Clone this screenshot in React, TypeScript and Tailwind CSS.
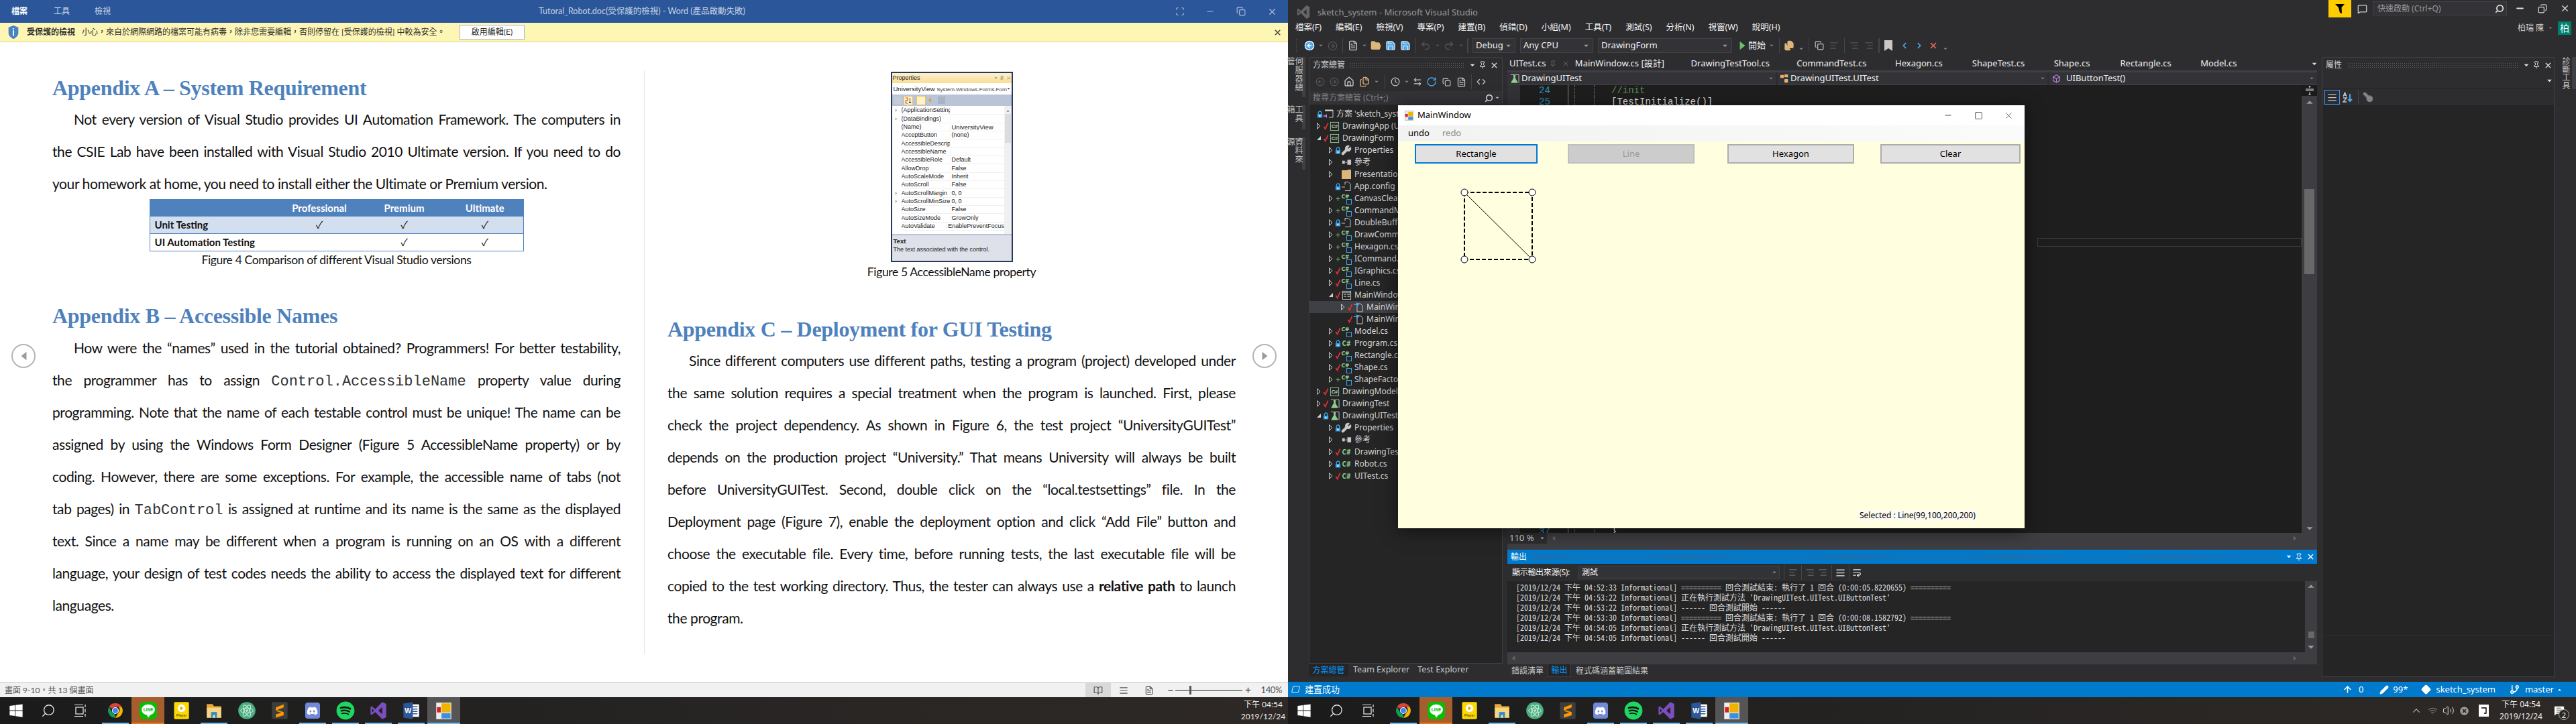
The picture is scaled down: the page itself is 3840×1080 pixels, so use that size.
import type { ReactNode } from "react";
import {
  AlignJustify, AlignLeft, AlignRight, ArrowLeftRight, ArrowUp, BookOpen, ChevronLeft, ChevronRight, ChevronUp, CircleArrowLeft, CircleArrowRight, CircleX, Clock, Code,
  Copy, Diamond, FileText, Files, FolderOpen, GitBranch, House, KeyRound, MessageSquare, MessageSquareText, Minus, Pencil, Pin, Plus, RotateCw, Save,
  Scan, Search, Square, Undo2, Redo2, Volume2, Wifi, Wrench, WrapText, X,
} from "lucide-react";
import { FaDiscord, FaWindows } from "react-icons/fa";

const grip = "bg-[radial-gradient(circle,#5c5c60_0.7px,transparent_0.8px)] bg-[length:3px_3px]";

// ---------- shared small drawings ----------

function VsLogo({ className }: { className: string }) {
  return (
    <svg viewBox="0 0 24 24" className={className} fill="currentColor">
      <path fillRule="evenodd" d="M17 1 L22 3.5 V20.5 L17 23 L8 14 L3.5 17.5 L2 16.5 V7.5 L3.5 6.5 L8 10 Z M17 7.5 L12 12 L17 16.5 Z M4 9.5 V14.5 L6.4 12 Z" />
    </svg>
  );
}

function Tri({ dir = "down", className = "" }: { dir?: "down" | "up" | "left" | "right"; className?: string }) {
  const pts = { down: "0,1 8,1 4,5", up: "0,5 8,5 4,1", left: "6,0 6,8 1,4", right: "1,0 1,8 6,4" }[dir];
  return (
    <svg viewBox={dir === "left" || dir === "right" ? "0 0 7 8" : "0 0 8 6"} className={className} fill="currentColor">
      <polygon points={pts} />
    </svg>
  );
}

function Taskbar({ tray }: { tray?: boolean }) {
  const icons: { icon: ReactNode; line?: string; bg?: string }[] = [
    {
      line: "bg-[#76b9ed] w-[40px]",
      icon: (
        <svg viewBox="0 0 24 24" className="h-[26px] w-[26px]">
          <path fill="#db4437" d="M3.3 7A10 10 0 0 1 20.7 7H12a5 5 0 0 0-4.3 2.5Z" />
          <path fill="#f4b400" d="M20.7 7A10 10 0 0 1 12 22l4.3-7.5a5 5 0 0 0 0-7.5Z" />
          <path fill="#0f9d58" d="M12 22A10 10 0 0 1 3.3 7l4.3 7.5a5 5 0 0 0 4.4 2.5Z" />
          <circle cx="12" cy="12" r="4.6" fill="#fff" />
          <circle cx="12" cy="12" r="3.6" fill="#4285f4" />
        </svg>
      ),
    },
    {
      line: "bg-[#f07a12] w-[49px]",
      bg: "bg-[#a65e2e]",
      icon: (
        <svg viewBox="0 0 24 24" className="h-[28px] w-[28px]">
          <rect x="1" y="1" width="22" height="22" rx="5" fill="#00c300" />
          <ellipse cx="12" cy="11" rx="8.5" ry="7" fill="#fff" />
          <path d="M10 17 L12 21 L15 17 Z" fill="#fff" />
          <text x="12" y="13" textAnchor="middle" fontSize="5.5" fontWeight="700" fill="#00c300" fontFamily="Liberation Sans, sans-serif">LINE</text>
        </svg>
      ),
    },
    {
      icon: (
        <svg viewBox="0 0 24 24" className="h-[28px] w-[28px]">
          <rect x="3" y="1" width="19" height="22" rx="1.5" fill="#ffd800" />
          <circle cx="12.5" cy="9" r="5" fill="#fff" />
          <polygon points="11,6.5 15,9 11,11.5" fill="#e0a000" />
          <text x="12.5" y="20" textAnchor="middle" fontSize="4.5" fontWeight="700" fill="#6b5a00" fontFamily="Liberation Sans, sans-serif">Player</text>
        </svg>
      ),
    },
    {
      line: "bg-[#76b9ed] w-[40px]",
      icon: (
        <svg viewBox="0 0 24 24" className="h-[26px] w-[26px]">
          <path fill="#e8a93a" d="M2 3h8l2 3h10v4H2Z" />
          <rect x="2" y="8" width="20" height="14" fill="#f6d680" />
          <rect x="8" y="14" width="8" height="8" fill="#2a8ad4" />
          <rect x="10.5" y="18" width="3" height="4" fill="#f6d680" />
        </svg>
      ),
    },
    {
      icon: (
        <svg viewBox="0 0 24 24" className="h-[28px] w-[28px]" fill="none">
          <circle cx="12" cy="12" r="11" fill="#4aae80" />
          <g stroke="#d9f2e5" strokeWidth="0.8">
            <ellipse cx="12" cy="12" rx="8" ry="3.2" />
            <ellipse cx="12" cy="12" rx="8" ry="3.2" transform="rotate(60 12 12)" />
            <ellipse cx="12" cy="12" rx="8" ry="3.2" transform="rotate(120 12 12)" />
          </g>
          <circle cx="12" cy="12" r="1.4" fill="#d9f2e5" />
        </svg>
      ),
    },
    {
      icon: (
        <svg viewBox="0 0 24 24" className="h-[28px] w-[28px]">
          <rect x="2" y="1" width="20" height="22" rx="1.5" fill="#3d3d3d" />
          <path fill="#ff9800" d="M17 4 L7 8 V12 L17 8 Z M7 11 L17 14 V18 L7 21 V17 L14 14.5 L7 12.5 Z" />
        </svg>
      ),
    },
    {
      line: "bg-[#76b9ed] w-[40px]",
      icon: (
        <span className="flex h-[24px] w-[22px] items-center justify-center rounded-[4px] bg-[#7289da] text-white">
          <FaDiscord className="h-[17px] w-[17px]" />
        </span>
      ),
    },
    {
      line: "bg-[#76b9ed] w-[40px]",
      icon: (
        <svg viewBox="0 0 24 24" className="h-[28px] w-[28px]" fill="none" stroke="#111" strokeLinecap="round">
          <circle cx="12" cy="12" r="11.5" fill="#1ed760" stroke="none" />
          <path strokeWidth="2.4" d="M6 8.6c4-1.2 8.5-.9 12 1" />
          <path strokeWidth="2" d="M6.8 12.3c3.5-1 7.2-.6 10.2 1.1" />
          <path strokeWidth="1.6" d="M7.5 15.7c2.8-.7 5.7-.4 8.2 1" />
        </svg>
      ),
    },
    { line: "bg-[#76b9ed] w-[40px]", icon: <VsLogo className="h-[30px] w-[28px] text-[#7b4fc0]" /> },
    {
      line: "bg-[#76b9ed] w-[40px]",
      icon: (
        <svg viewBox="0 0 24 24" className="h-[28px] w-[28px]">
          <rect x="9" y="4" width="13" height="16" fill="#fff" />
          <path d="M11 7h9M11 10h9M11 13h9M11 16h9" stroke="#2b579a" strokeWidth="1.3" />
          <path d="M2 3 L14 1 V23 L2 21 Z" fill="#2b579a" />
          <text x="8" y="15.5" textAnchor="middle" fontSize="9" fontWeight="700" fill="#fff" fontFamily="Liberation Sans, sans-serif">W</text>
        </svg>
      ),
    },
    {
      line: "bg-[#76b9ed] w-[49px]",
      bg: "bg-[#555555]",
      icon: (
        <svg viewBox="0 0 24 24" className="h-[27px] w-[27px]">
          <rect x="2" y="1" width="20" height="22" fill="#eee" />
          <rect x="3" y="7" width="5" height="7" fill="#d32020" />
          <rect x="9" y="2" width="12" height="12" fill="#f0b400" />
          <rect x="9" y="15" width="12" height="7" fill="#3f8fe0" />
        </svg>
      ),
    },
  ];
  return (
    <div className="flex h-[40px] shrink-0 items-stretch bg-linear-to-r from-[#1b1b1b] via-[#262423] to-[#2e2926] text-[#eeeeee]">
      <div className="flex w-[48px] items-center justify-center"><FaWindows className="h-[22px] w-[22px] text-white" /></div>
      <div className="flex w-[48px] items-center justify-center"><Search className="h-[22px] w-[22px] -scale-x-100" strokeWidth={1.4} /></div>
      <div className="mr-[3px] flex w-[48px] items-center justify-center">
        <svg viewBox="0 0 20 20" className="h-[20px] w-[20px]" fill="none" stroke="#eee" strokeWidth="1.2">
          <rect x="3" y="5" width="11" height="10" />
          <path d="M1 1.5h13M1 18.5h13M17 1v4M17 7.5v5M17 15v4" />
        </svg>
      </div>
      {icons.map((it, i) => (
        <div key={i} className={`relative flex w-[49px] items-center justify-center ${it.bg ?? ""}`}>
          {it.icon}
          {it.line && <span className={`absolute bottom-0 h-[2px] ${it.line}`} />}
        </div>
      ))}
      <div className="ml-auto flex items-center">
        {tray && (
          <div className="mr-[14px] flex items-center text-[#d8d8d8]">
            <ChevronUp className="mr-[8px] h-[18px] w-[18px]" strokeWidth={1.4} />
            <Wifi className="mr-[7px] h-[15px] w-[15px] text-[#999]" strokeWidth={1.4} />
            <Volume2 className="mr-[6px] h-[18px] w-[18px]" strokeWidth={1.3} />
            <CircleX className="mr-[13px] h-[17px] w-[17px] fill-[#999] text-[#222]" strokeWidth={2} />
            <svg viewBox="0 0 15 18" className="h-[18px] w-[15px]">
              <rect width="15" height="18" fill="#fff" />
              <path d="M4 5h7v8H8" fill="none" stroke="#000" strokeWidth="1.4" />
            </svg>
          </div>
        )}
        <div className={`flex flex-col items-center text-[12px] leading-[18px] ${tray ? "w-[68px]" : "mr-[3px] w-[68px]"}`}>
          <span>下午 04:54</span>
          <span>2019/12/24</span>
        </div>
        {tray && (
          <div className="relative ml-[14px] mr-[10px] w-[24px]">
            <MessageSquareText className="h-[18px] w-[18px] fill-white text-[#333]" strokeWidth={1.2} />
            <span className="absolute left-[8px] top-[7px] flex h-[16px] w-[16px] items-center justify-center rounded-full border border-[#aaa] bg-[#2a2725] text-[11px] leading-none">2</span>
          </div>
        )}
      </div>
    </div>
  );
}

// ---------- Word side ----------

function Line({ indent, last, children }: { indent?: boolean; last?: boolean; children: ReactNode }) {
  return (
    <div
      className={`h-[48px] whitespace-nowrap text-[21px] leading-[48px] tracking-[-0.42px] text-[#111] ${indent ? "pl-[32px]" : ""} ${last ? "" : "[text-align-last:justify]"}`}
    >
      {children}
    </div>
  );
}

function Mono({ children }: { children: ReactNode }) {
  return <span className="font-['Liberation_Mono',monospace] text-[22px] font-normal tracking-normal text-[#333]">{children}</span>;
}

function Heading({ children, className = "" }: { children: ReactNode; className?: string }) {
  return <h2 className={`h-[48px] whitespace-nowrap font-['Liberation_Serif',serif] text-[32px] font-bold leading-[48px] tracking-[-0.3px] text-[#4f81bd] ${className}`}>{children}</h2>;
}

function NavCircle({ side }: { side: "left" | "right" }) {
  return (
    <div className={`absolute top-[513px] flex h-[36px] w-[36px] items-center justify-center rounded-full border-2 border-[#b5b5b5] bg-white text-[#9a9a9a] ${side === "left" ? "left-[17px]" : "left-[1867px]"}`}>
      <Tri dir={side} className="h-[20px] w-[11px]" />
    </div>
  );
}

const gridRows: [string, string, boolean?][] = [
  ["(ApplicationSetting", "", true],
  ["(DataBindings)", "", true],
  ["(Name)", "UniversityView"],
  ["AcceptButton", "(none)"],
  ["AccessibleDescripti", ""],
  ["AccessibleName", ""],
  ["AccessibleRole", "Default"],
  ["AllowDrop", "False"],
  ["AutoScaleMode", "Inherit"],
  ["AutoScroll", "False"],
  ["AutoScrollMargin", "0, 0", true],
  ["AutoScrollMinSize", "0, 0", true],
  ["AutoSize", "False"],
  ["AutoSizeMode", "GrowOnly"],
  ["AutoValidate", "EnablePreventFocusC"],
];

function PropertyFigure() {
  return (
    <div className="mx-auto flex h-[284px] w-[182px] flex-col border-2 border-[#26395a] bg-[#ccd5e3] font-['Liberation_Sans',sans-serif] text-[9px] leading-none text-[#222]">
      <div className="flex h-[15px] shrink-0 items-center justify-between bg-linear-to-b from-[#fdf0cc] to-[#f8dd93] px-[1px]">
        <span>Properties</span>
        <span className="flex items-center gap-[3px] text-[#666]"><Tri className="h-[3px] w-[5px]" /><Pin className="h-[7px] w-[7px]" /><X className="h-[7px] w-[7px]" /></span>
      </div>
      <div className="flex h-[17px] shrink-0 items-center justify-between whitespace-nowrap bg-white px-[2px]">
        <span className="overflow-hidden"><span className="text-[9.5px]">UniversityView</span> <span className="text-[8px] text-[#444]">System.Windows.Forms.Forn</span></span>
        <Tri className="h-[3px] w-[5px] shrink-0" />
      </div>
      <div className="flex h-[17px] shrink-0 items-center gap-[3px] bg-[#b9c5d6] px-[3px] text-[#555]">
        <span className="h-[11px] w-[11px] bg-[#c4ccd8]" />
        <span className="flex h-[14px] w-[14px] items-center justify-center border border-[#e5c365] bg-[#fff2c8]">
          <svg viewBox="0 0 10 10" className="h-[10px] w-[10px]" fill="none"><path d="M1 1h3v4H1v4h3" stroke="#c33" /><path d="M7.5 1v8M6 7l1.5 2L9 7" stroke="#333" /></svg>
        </span>
        <span className="ml-[2px] h-[14px] w-[14px] border border-[#e5c365] bg-[#fff2c8]" />
        <svg viewBox="0 0 8 12" className="h-[11px] w-[7px]"><path d="M5 0 L1 7h3L3 12l4-7H4Z" fill="#e09a20" /></svg>
        <span className="ml-[5px] h-[11px] w-[11px] bg-[#a8b4c6]" />
      </div>
      <div className="relative flex-1 overflow-hidden bg-white">
        <div className="flex flex-col pl-[14px] pr-[11px] pt-[1px]">
          {gridRows.map(([n, v, exp]) => (
            <div key={n} className="relative flex h-[12.35px] shrink-0 items-center whitespace-nowrap border-b border-[#f0f0f0]">
              {exp && <Tri dir="right" className="absolute left-[-10px] h-[5px] w-[4px] text-[#aaa]" />}
              <span className="w-[73px] overflow-hidden border-r border-[#f0f0f0]">{n}</span>
              <span className={`overflow-hidden pl-[2px] ${n === "(Name)" ? "text-[9.5px] font-medium" : ""}`}>{v}</span>
            </div>
          ))}
        </div>
        <div className="absolute right-0 top-0 flex h-full w-[11px] flex-col items-center bg-[#f0f0f0]">
          <Tri dir="up" className="mt-[6px] h-[3px] w-[5px] text-[#555]" />
          <span className="mt-[3px] h-[43px] w-[9px] bg-[#dcdcdc]" />
        </div>
      </div>
      <div className="h-[40px] shrink-0 border-t-2 border-[#b9c5d6] bg-[#dee1e9] px-[2px] pt-[4px]">
        <div className="text-[9.5px] font-semibold">Text</div>
        <div className="mt-[3px] whitespace-nowrap">The text associated with the control.</div>
      </div>
    </div>
  );
}

function WordWindow() {
  return (
    <div className="relative flex h-full w-[1920px] shrink-0 flex-col bg-white font-['Lato','Noto_Sans_CJK_TC',sans-serif]">
      <div className="flex h-[34px] shrink-0 items-center bg-[#2b579a] text-[12px] text-white">
        <span className="ml-[17px] w-[63px] font-bold">檔案</span>
        <span className="w-[61px] text-[#c5d2e5]">工具</span>
        <span className="w-[24px] text-[#c5d2e5]">檢視</span>
        <span className="ml-[638px] whitespace-nowrap text-[12.5px] text-[#c5d2e5]">Tutoral_Robot.doc(受保護的檢視) - Word (產品啟動失敗)</span>
        <div className="ml-auto flex items-center text-[#a9bcd8]">
          <Scan className="mr-[31px] h-[14px] w-[14px]" />
          <Minus className="mr-[32px] h-[14px] w-[14px]" />
          <Copy className="mr-[32px] h-[14px] w-[14px]" />
          <X className="mr-[16px] h-[15px] w-[15px]" />
        </div>
      </div>
      <div className="flex h-[29px] shrink-0 items-center border-b border-[#d8d88f] bg-[#fdf6b5] text-[12px] text-[#333]">
        <svg viewBox="0 0 20 24" className="ml-[10px] h-[22px] w-[20px]">
          <path d="M10 1 L18 4 V13 C18 18 14 21 10 23 C6 21 2 18 2 13 V4 Z" fill="#4a83c4" />
          <rect x="9" y="9" width="2" height="9" fill="#fff" />
          <rect x="9" y="5.5" width="2" height="2" fill="#fff" />
        </svg>
        <span className="ml-[10px] w-[72px] whitespace-nowrap font-bold">受保護的檢視</span>
        <span className="ml-[10px] w-[563px] whitespace-nowrap">小心，來自於網際網路的檔案可能有病毒，除非您需要編輯，否則停留在 [受保護的檢視] 中較為安全。</span>
        <button className="flex h-[22px] w-[97px] items-center justify-center border border-[#b0b4bc] bg-white text-[12px] text-[#333]">啟用編輯(E)</button>
        <X className="ml-auto mr-[9px] h-[13px] w-[13px] text-[#444]" strokeWidth={3} />
      </div>
      <div className="flex min-h-0 flex-1">
        <div className="w-[960px] shrink-0 pl-[78px] pr-[35px] pt-[44px]">
          <Heading className="-mb-px">Appendix A – System Requirement</Heading>
          <Line indent>Not every version of Visual Studio provides UI Automation Framework. The computers in</Line>
          <Line>the CSIE Lab have been installed with Visual Studio 2010 Ultimate version. If you need to do</Line>
          <Line last>your homework at home, you need to install either the Ultimate or Premium version.</Line>
          <table className="mx-auto -mt-px h-[77px] w-[558px] border-collapse border border-[#4f81bd] text-[15px] leading-none text-[#111]">
            <tbody>
              <tr className="h-[25px] bg-[#4f81bd] font-bold text-white">
                <td className="w-[190px]" />
                <td className="w-[126px] text-center">Professional</td>
                <td className="w-[127px] text-center">Premium</td>
                <td className="text-center">Ultimate</td>
              </tr>
              <tr className="h-[26px] border-b border-[#4f81bd] bg-[#d3dfee] font-bold">
                <td className="pl-[7px]">Unit Testing</td>
                <td className="text-center font-normal">✓</td>
                <td className="text-center font-normal">✓</td>
                <td className="text-center font-normal">✓</td>
              </tr>
              <tr className="h-[26px] font-bold">
                <td className="pl-[7px]">UI Automation Testing</td>
                <td />
                <td className="text-center font-normal">✓</td>
                <td className="text-center font-normal">✓</td>
              </tr>
            </tbody>
          </table>
          <div className="h-[26px] text-center text-[17.5px] leading-[26px] tracking-[-0.35px] text-[#111]">Figure 4 Comparison of different Visual Studio versions</div>
          <Heading className="mt-[46px]">Appendix B – Accessible Names</Heading>
          <Line indent>How were the “names” used in the tutorial obtained? Programmers! For better testability,</Line>
          <Line>the programmer has to assign <Mono>Control.AccessibleName</Mono> property value during</Line>
          <Line>programming. Note that the name of each testable control must be unique! The name can be</Line>
          <Line>assigned by using the Windows Form Designer (Figure 5 AccessibleName property) or by</Line>
          <Line>coding. However, there are some exceptions. For example, the accessible name of tabs (not</Line>
          <Line>tab pages) in <Mono>TabControl</Mono> is assigned at runtime and its name is the same as the displayed</Line>
          <Line>text. Since a name may be different when a program is running on an OS with a different</Line>
          <Line>language, your design of test codes needs the ability to access the displayed text for different</Line>
          <Line last>languages.</Line>
        </div>
        <div className="mt-[42px] mb-[42px] w-[960px] shrink-0 border-l border-[#e3e3e3] pl-[34px] pr-[78px] pt-[2px]">
          <PropertyFigure />
          <div className="h-[30px] text-center text-[17.5px] leading-[30px] tracking-[-0.35px] text-[#111]">Figure 5 AccessibleName property</div>
          <Heading className="-mb-px mt-[46px]">Appendix C – Deployment for GUI Testing</Heading>
          <Line indent>Since different computers use different paths, testing a program (project) developed under</Line>
          <Line>the same solution requires a special treatment when the program is launched. First, please</Line>
          <Line>check the project dependency. As shown in Figure 6, the test project “UniversityGUITest”</Line>
          <Line>depends on the production project “University.” That means University will always be built</Line>
          <Line>before UniversityGUITest. Second, double click on the “local.testsettings” file. In the</Line>
          <Line>Deployment page (Figure 7), enable the deployment option and click “Add File” button and</Line>
          <Line>choose the executable file. Every time, before running tests, the last executable file will be</Line>
          <Line>copied to the test working directory. Thus, the tester can always use a <b>relative path</b> to launch</Line>
          <Line last>the program.</Line>
        </div>
      </div>
      <NavCircle side="left" />
      <NavCircle side="right" />
      <div className="flex h-[22px] shrink-0 items-stretch border-t border-[#c6c6c6] bg-[#f1f1f1] text-[12px] text-[#555]">
        <span className="ml-[7px] self-center whitespace-nowrap">畫面 9-10，共 13 個畫面</span>
        <div className="ml-auto flex items-center">
          <span className="flex h-full w-[38px] items-center justify-center bg-[#d9d9d9]"><BookOpen className="h-[14px] w-[14px]" /></span>
          <AlignJustify className="ml-[12px] h-[14px] w-[14px]" />
          <FileText className="ml-[24px] h-[14px] w-[14px]" />
          <Minus className="ml-[20px] h-[10px] w-[10px]" strokeWidth={4} />
          <div className="ml-[2px] flex h-[2px] w-[100px] items-center bg-[#888]"><span className="ml-[21px] h-[13px] w-[3px] bg-[#555]" /></div>
          <Plus className="ml-[3px] h-[11px] w-[11px]" strokeWidth={3} />
          <span className="ml-[14px] mr-[9px] text-[13px] tracking-[-0.4px]">140%</span>
        </div>
      </div>
      <Taskbar />
    </div>
  );
}

// ---------- Visual Studio side ----------

function Sep({ className }: { className: string }) {
  return <span className={`flex justify-center ${className}`}><span className="h-[22px] w-px bg-[#46464a]" /></span>;
}

function Slot({ className, children }: { className: string; children: ReactNode }) {
  return <span className={`flex items-center justify-center ${className}`}>{children}</span>;
}

function Combo({ className, label }: { className: string; label: string }) {
  return (
    <div className={`flex h-[22px] items-center justify-between border border-[#434346] bg-[#333337] pl-[4px] pr-[6px] text-[13px] text-[#f1f1f1] ${className}`}>
      <span>{label}</span>
      <Tri className="h-[5px] w-[7px] text-[#999]" />
    </div>
  );
}

function Vertical({ children, className = "" }: { children: ReactNode; className?: string }) {
  return <div className={`border-r-[5px] border-[#3f3f46] [writing-mode:vertical-rl] text-[12px] leading-none tracking-[1px] text-[#c8c8c8] ${className}`}>{children}</div>;
}

function Lock() {
  return (
    <svg viewBox="0 0 10 12" className="h-[11px] w-[9px]" fill="none">
      <path d="M2.5 6V3.5a2.5 2.5 0 0 1 5 0V6" stroke="#3ba3e8" strokeWidth="1.4" />
      <rect x="1" y="5.5" width="8" height="6" fill="#3ba3e8" />
      <rect x="4" y="7.5" width="2" height="2.5" fill="#fff" />
    </svg>
  );
}

function Status({ kind }: { kind: string }) {
  if (kind === "lock") return <Lock />;
  if (kind === "check")
    return (
      <svg viewBox="0 0 10 12" className="h-[12px] w-[9px]" fill="none" stroke="#f03030" strokeWidth="1.8">
        <path d="M1.5 7 L4 11 L8.5 1" />
      </svg>
    );
  if (kind === "plus") return <Plus className="h-[9px] w-[9px] text-[#6cc06c]" strokeWidth={3} />;
  return null;
}

function FlaskIcon() {
  return (
    <svg viewBox="0 0 16 16" className="h-[15px] w-[15px]" fill="none">
      <path d="M2 1.5h13v13" stroke="#c8c8c8" />
      <path d="M6 2h4M7 2v5L3 14h10L9 7V2" fill="#8dce8d" stroke="#8dce8d" />
    </svg>
  );
}

function TreeIcon({ kind }: { kind: string }) {
  switch (kind) {
    case "proj":
      return (
        <svg viewBox="0 0 16 16" className="h-[15px] w-[15px]" fill="none">
          <rect x="1.5" y="1.5" width="13" height="13" stroke="#8dce8d" />
          <text x="8" y="11" textAnchor="middle" fontSize="8" fontWeight="700" fill="#c8c8c8" fontFamily="Liberation Sans, sans-serif">C#</text>
        </svg>
      );
    case "sln":
      return (
        <svg viewBox="0 0 16 16" className="h-[16px] w-[16px]" fill="none">
          <path d="M3 2h12v11H9" stroke="#c8c8c8" />
          <rect x="3" y="2" width="12" height="2" fill="#c8c8c8" />
          <path d="M1 9l2 1.5L6 8v6l-3-2.5L1 13Z" fill="#b180d7" />
        </svg>
      );
    case "wrench":
      return <Wrench className="h-[16px] w-[16px] fill-[#c8c8c8] text-[#c8c8c8]" />;
    case "ref":
      return (
        <svg viewBox="0 0 16 16" className="h-[15px] w-[15px]" fill="#c8c8c8">
          <rect x="1" y="5" width="4" height="5" />
          <rect x="6" y="7" width="2" height="1.5" />
          <rect x="9" y="3.5" width="6" height="8" />
        </svg>
      );
    case "folder":
      return (
        <svg viewBox="0 0 16 16" className="h-[16px] w-[16px]" fill="#dcb67a">
          <path d="M1 2h8l2-1h4v14H1Z" />
        </svg>
      );
    case "file":
    case "fileLock":
      return (
        <svg viewBox="0 0 16 16" className="h-[16px] w-[16px]" fill="none" stroke="#c8c8c8">
          <path d="M6 1.5h5l3 3v10H6" />
          <path d="M6 1.5v4M1 9h5" />
        </svg>
      );
    case "form":
      return (
        <svg viewBox="0 0 16 16" className="h-[15px] w-[15px]" fill="none" stroke="#c8c8c8">
          <rect x="1.5" y="1.5" width="13" height="13" />
          <path d="M2 4h12M4 7h3M9 7h4M4 10h3M9 10h4" />
        </svg>
      );
    case "cs":
      return <span className="text-[10px] font-bold leading-none text-[#8dce8d]">C#</span>;
    case "csLink":
      return (
        <span className="relative h-[15px] w-[15px]">
          <span className="absolute left-0 top-[-1px] text-[9px] font-bold leading-none text-[#8dce8d]">C#</span>
          <span className="absolute bottom-[-1px] right-0 h-[8px] w-[8px] border border-[#3ba3e8]" />
        </span>
      );
    case "link":
      return (
        <svg viewBox="0 0 16 16" className="h-[16px] w-[16px]" fill="none">
          <path d="M6 3h5l3 3v9H6Z" stroke="#c8c8c8" />
          <path d="M1 4h6M5 1.5 L8 4 L5 6.5" stroke="#4ea6ea" strokeWidth="1.6" />
        </svg>
      );
    case "test":
      return <FlaskIcon />;
    default:
      return null;
  }
}

type Row = [number, "c" | "e" | "", string, string, string];

const tree: Row[] = [
  [0, "", "lock", "sln", "方案 'sketch_system' (5 專案)"],
  [1, "c", "check", "proj", "DrawingApp (Universal Windows)"],
  [1, "e", "check", "proj", "DrawingForm"],
  [2, "c", "lock", "wrench", "Properties"],
  [2, "c", "", "ref", "參考"],
  [2, "c", "", "folder", "PresentationModel"],
  [2, "", "lock", "file", "App.config"],
  [2, "c", "plus", "csLink", "CanvasClearCommand.cs"],
  [2, "c", "plus", "csLink", "CommandManager.cs"],
  [2, "c", "lock", "fileLock", "DoubleBufferedPanel.cs"],
  [2, "c", "plus", "csLink", "DrawCommand.cs"],
  [2, "c", "plus", "csLink", "Hexagon.cs"],
  [2, "c", "plus", "csLink", "ICommand.cs"],
  [2, "c", "check", "csLink", "IGraphics.cs"],
  [2, "c", "check", "csLink", "Line.cs"],
  [2, "e", "check", "form", "MainWindow.cs"],
  [3, "c", "check", "link", "MainWindow.Designer.cs"],
  [3, "", "check", "link", "MainWindow.resx"],
  [2, "c", "check", "csLink", "Model.cs"],
  [2, "c", "lock", "cs", "Program.cs"],
  [2, "c", "check", "csLink", "Rectangle.cs"],
  [2, "c", "check", "csLink", "Shape.cs"],
  [2, "c", "plus", "csLink", "ShapeFactory.cs"],
  [1, "c", "check", "proj", "DrawingModel"],
  [1, "c", "check", "test", "DrawingTest"],
  [1, "e", "lock", "test", "DrawingUITest"],
  [2, "c", "lock", "wrench", "Properties"],
  [2, "c", "", "ref", "參考"],
  [2, "c", "check", "cs", "DrawingTestTool.cs"],
  [2, "c", "lock", "cs", "Robot.cs"],
  [2, "c", "check", "cs", "UITest.cs"],
];

const indent = ["pl-[0px]", "pl-[9px]", "pl-[27px]", "pl-[45px]"];

function Explorer() {
  return (
    <div className="flex w-[289px] shrink-0 flex-col">
      <div className="flex h-[905px] flex-col overflow-hidden border border-[#3f3f46] bg-[#252526]">
        <div className="flex h-[22px] shrink-0 items-center bg-[#2d2d30] pl-[5px] text-[12px] text-[#d0d0d0]">
          <span>方案總管</span>
          <span className={`ml-[7px] h-[8px] w-[172px] ${grip}`} />
          <Tri className="ml-[7px] h-[5px] w-[8px] text-[#e0e0e0]" />
          <Pin className="ml-[5px] h-[12px] w-[12px] text-[#e0e0e0]" />
          <X className="ml-[5px] h-[13px] w-[13px] text-[#e0e0e0]" strokeWidth={2.4} />
        </div>
        <div className="flex h-[28px] shrink-0 items-center bg-[#2d2d30] text-[#c8c8c8]">
          <Slot className="ml-[6px] w-[20px]"><CircleArrowLeft className="h-[14px] w-[14px] text-[#555]" /></Slot>
          <Slot className="w-[22px]"><CircleArrowRight className="h-[14px] w-[14px] text-[#555]" /></Slot>
          <Slot className="w-[22px]"><House className="h-[16px] w-[16px]" /></Slot>
          <Slot className="w-[23px]"><Files className="h-[16px] w-[16px] text-[#dcb67a]" /></Slot>
          <Slot className="w-[13px]"><Tri className="h-[4px] w-[6px] text-[#888]" /></Slot>
          <Sep className="w-[12px]" />
          <Slot className="w-[20px]"><Clock className="h-[14px] w-[14px]" /></Slot>
          <Slot className="w-[13px]"><Tri className="h-[4px] w-[6px] text-[#888]" /></Slot>
          <Slot className="w-[20px]"><ArrowLeftRight className="h-[14px] w-[14px]" /></Slot>
          <Slot className="w-[22px]"><RotateCw className="h-[16px] w-[16px] text-[#4ea6ea]" /></Slot>
          <Slot className="w-[22px]"><Copy className="h-[13px] w-[13px]" /></Slot>
          <Slot className="w-[22px]"><FileText className="h-[15px] w-[15px]" /></Slot>
          <Sep className="w-[8px]" />
          <Slot className="w-[22px]"><Code className="h-[14px] w-[14px]" /></Slot>
        </div>
        <div className="flex h-[20px] shrink-0 items-center bg-[#333337] pl-[5px] text-[12px] text-[#808080]">
          <span>搜尋方案總管 (Ctrl+;)</span>
          <Search className="ml-auto h-[13px] w-[13px] -scale-x-100 text-[#e0e0e0]" strokeWidth={3} />
          <Tri className="ml-[3px] mr-[4px] h-[4px] w-[6px] text-[#c8c8c8]" />
        </div>
        <div className="flex flex-col pt-[5px] font-['Noto_Sans','Noto_Sans_CJK_TC',sans-serif] text-[12px] text-[#d4d4d4]">
          {tree.map((r, i) => (
            <div key={i} className={`flex h-[18px] shrink-0 items-center whitespace-nowrap ${indent[r[0]]} ${i === 16 ? "bg-[#3f3f46]" : ""}`}>
              <Slot className="w-[10px]">
                {r[1] === "c" && <svg viewBox="0 0 6 10" className="h-[10px] w-[6px]" fill="none" stroke="#d0d0d0"><path d="M0.5 0.7 L5 5 L0.5 9.3 Z" /></svg>}
                {r[1] === "e" && <svg viewBox="0 0 8 8" className="h-[8px] w-[8px]" fill="#d0d0d0"><path d="M7 1V7H1Z" /></svg>}
              </Slot>
              <Slot className="w-[10px]"><Status kind={r[2]} /></Slot>
              <Slot className="w-[16px]"><TreeIcon kind={r[3]} /></Slot>
              <span className="ml-[4px]">{r[4]}</span>
            </div>
          ))}
        </div>
      </div>
      <div className="flex h-[19px] items-center text-[12.5px] leading-none text-[#c8c8c8]">
        <span className="flex h-full w-[59px] items-center justify-center bg-[#252526] text-[12px] text-[#0097fb]">方案總管</span>
        <span className="ml-[7px] flex h-full items-center">Team Explorer</span>
        <span className="ml-[12px] flex h-full items-center">Test Explorer</span>
      </div>
    </div>
  );
}

const tabs: [string, string][] = [
  ["MainWindow.cs [設計]", "w-[173px]"],
  ["DrawingTestTool.cs", "w-[158px]"],
  ["CommandTest.cs", "w-[147px]"],
  ["Hexagon.cs", "w-[115px]"],
  ["ShapeTest.cs", "w-[122px]"],
  ["Shape.cs", "w-[99px]"],
  ["Rectangle.cs", "w-[120px]"],
  ["Model.cs", "w-[158px]"],
];

function CodeRow({ num, children }: { num: string; children?: ReactNode }) {
  return (
    <div className="flex h-[17px] shrink-0 items-stretch font-['Liberation_Mono',monospace] text-[14px] leading-[17px]">
      <span className="w-[71px] pl-[28px] text-[#2b91af]">{num}</span>
      <span className="w-[10px] border-l border-[#8a8a8a]" />
      <span className="w-[29px] border-l border-dashed border-[#6a6a6a]" />
      <span className="w-[26px] border-l border-dashed border-[#6a6a6a]" />
      <span className="whitespace-nowrap">{children}</span>
    </div>
  );
}

const logLines = [
  "[2019/12/24 下午 04:52:33 Informational] ========== 回合測試結束: 執行了 1 回合 (0:00:05.8220655) ==========",
  "[2019/12/24 下午 04:53:22 Informational] 正在執行測試方法 'DrawingUITest.UITest.UIButtonTest'",
  "[2019/12/24 下午 04:53:22 Informational] ------ 回合測試開始 ------",
  "[2019/12/24 下午 04:53:30 Informational] ========== 回合測試結束: 執行了 1 回合 (0:00:08.1582792) ==========",
  "[2019/12/24 下午 04:54:05 Informational] 正在執行測試方法 'DrawingUITest.UITest.UIButtonTest'",
  "[2019/12/24 下午 04:54:05 Informational] ------ 回合測試開始 ------",
];

function Center() {
  return (
    <div className="flex w-[1221px] shrink-0 flex-col overflow-hidden px-[7px]">
      <div className="flex h-[20px] shrink-0 items-center whitespace-nowrap text-[13px] text-[#f1f1f1]">
        <div className="flex w-[101px] items-center pl-[3px]">
          <span>UITest.cs</span>
          <Pin className="ml-[6px] h-[10px] w-[10px] text-[#666]" />
          <X className="ml-[8px] h-[12px] w-[12px] text-[#666]" />
        </div>
        {tabs.map(([t, w]) => <span key={t} className={w}>{t}</span>)}
        <Tri className="ml-[8px] h-[5px] w-[8px] text-[#e0e0e0]" />
      </div>
      <div className="flex h-[22px] shrink-0 items-center gap-[3px] border-t-[3px] border-[#3f3f46] bg-[#2d2d30] text-[13px] text-[#f1f1f1]">
        <div className="flex h-full w-[400px] items-center justify-between border-b border-[#434346] bg-[#333337] pl-[3px] pr-[4px]">
          <span className="flex items-center gap-[3px]"><FlaskIcon />DrawingUITest</span>
          <Tri className="h-[4px] w-[6px] text-[#888]" />
        </div>
        <div className="flex h-full w-[402px] items-center justify-between border-b border-[#434346] bg-[#333337] pl-[3px] pr-[4px]">
          <span className="flex items-center gap-[2px]"><svg viewBox="0 0 16 16" className="h-[14px] w-[14px]" fill="#e8b26c"><rect x="1" y="2" width="6" height="5" rx="1" /><rect x="8" y="1" width="6" height="5" rx="1" /><rect x="8" y="9" width="6" height="6" rx="1" /></svg>DrawingUITest.UITest</span>
          <Tri className="h-[4px] w-[6px] text-[#888]" />
        </div>
        <div className="flex h-full flex-1 items-center justify-between border-b border-[#434346] bg-[#333337] pl-[4px] pr-[5px]">
          <span className="flex items-center gap-[8px]"><svg viewBox="0 0 16 16" className="h-[13px] w-[13px]" fill="none" stroke="#b180d7" strokeWidth="1.4"><path d="M8 1l6 3.5v7L8 15l-6-3.5v-7ZM8 8V15M2 4.5L8 8l6-3.5" /></svg>UIButtonTest()</span>
          <Tri className="h-[4px] w-[6px] text-[#888]" />
        </div>
      </div>
      <div className="flex h-[668px] shrink-0">
        <div className="w-[19px] shrink-0 bg-[#333337]" />
        <div className="relative flex flex-1 flex-col bg-[#1e1e1e] text-[#dcdcdc]">
          <CodeRow num="24"><span className="text-[#608b4e]">//init</span></CodeRow>
          <CodeRow num="25">[TestInitialize()]</CodeRow>
          <div className="absolute left-[771px] top-[228px] h-[13px] w-[394px] border border-[#3c3c3c]" />
          <div className="mt-auto h-[10px] overflow-hidden"><CodeRow num="37"><span className="text-[#dcdcdc]">{"}"}</span></CodeRow></div>
        </div>
        <div className="flex w-[23px] shrink-0 flex-col items-center bg-[#3e3e42]">
          <span className="flex h-[16px] w-full items-center justify-center bg-[#1b1b1b] text-white"><svg viewBox="0 0 14 14" className="h-[14px] w-[14px]" fill="none" stroke="#e0e0e0"><path d="M1 7h12M1 5h12M7 0v3M5.5 2 7 .5 8.5 2M7 14v-5M5.5 12 7 13.5 8.5 12" /></svg></span>
          <Tri dir="up" className="mt-[6px] h-[7px] w-[10px] text-[#999]" />
          <span className="mt-[126px] h-[127px] w-[15px] bg-[#686868]" />
          <Tri className="mt-auto mb-[3px] h-[7px] w-[10px] text-[#999]" />
        </div>
      </div>
      <div className="flex h-[25px] shrink-0 items-start bg-[#3e3e42] text-[13px] text-[#d0d0d0]">
        <div className="flex h-[16px] w-[59px] items-center justify-between bg-[#2d2d30] pl-[3px] pr-[4px]">
          <span>110 %</span>
          <Tri className="h-[4px] w-[6px]" />
        </div>
        <Tri dir="left" className="ml-[7px] mt-[2px] h-[12px] w-[6px] text-[#666]" />
        <Tri dir="right" className="ml-auto mr-[30px] mt-[2px] h-[12px] w-[6px] text-[#666]" />
      </div>
      <div className="flex h-[21px] shrink-0 items-center bg-[#007acc] pl-[5px] text-[12px] text-white">
        <span>輸出</span>
        <span className={`ml-[7px] h-[8px] flex-1 ${grip}`} />
        <Tri className="ml-[8px] h-[5px] w-[8px]" />
        <Pin className="ml-[5px] h-[12px] w-[12px]" />
        <X className="ml-[5px] mr-[3px] h-[13px] w-[13px]" strokeWidth={2.6} />
      </div>
      <div className="flex h-[26px] shrink-0 items-center bg-[#2d2d30] pl-[7px] text-[12px] text-[#f1f1f1]">
        <span className="w-[99px] whitespace-nowrap tracking-[-0.3px]">顯示輸出來源(S):</span>
        <div className="flex h-[20px] w-[300px] items-center justify-between border border-[#434346] bg-[#333337] pl-[4px] pr-[4px]">
          <span>測試</span>
          <Tri className="h-[4px] w-[6px] text-[#999]" />
        </div>
        <Sep className="w-[12px]" />
        <Slot className="w-[16px]"><AlignLeft className="h-[14px] w-[14px] text-[#666]" /></Slot>
        <Sep className="w-[8px]" />
        <Slot className="w-[18px]"><AlignRight className="h-[14px] w-[14px] text-[#666]" /></Slot>
        <Slot className="w-[20px]"><AlignRight className="h-[14px] w-[14px] text-[#666]" /></Slot>
        <Sep className="w-[6px]" />
        <Slot className="w-[20px]"><AlignJustify className="h-[15px] w-[15px] text-[#e8e8e8]" /></Slot>
        <Sep className="w-[6px]" />
        <Slot className="w-[18px]"><WrapText className="h-[14px] w-[14px] text-[#e8e8e8]" /></Slot>
      </div>
      <div className="flex h-[106px] shrink-0 bg-[#252526]">
        <div className="flex-1 whitespace-pre pl-[13px] pt-[1px] font-['Noto_Sans_Mono_CJK_TC','Liberation_Mono',monospace] text-[12px] leading-[15px] text-[#dcdcdc]">
          {logLines.map((l, i) => <div key={i} className="h-[15px]">{l}</div>)}
        </div>
        <div className="flex w-[18px] shrink-0 flex-col items-center bg-[#3e3e42] py-[4px]">
          <Tri dir="up" className="h-[7px] w-[10px] text-[#999]" />
          <span className="mt-auto mb-[10px] h-[10px] w-[9px] bg-[#686868]" />
          <Tri className="h-[7px] w-[10px] text-[#999]" />
        </div>
      </div>
      <div className="flex h-[18px] shrink-0 items-center justify-between bg-[#3e3e42] px-[6px]">
        <Tri dir="left" className="h-[12px] w-[6px] text-[#666]" />
        <Tri dir="right" className="mr-[24px] h-[12px] w-[6px] text-[#666]" />
      </div>
      <div className="flex h-[19px] shrink-0 items-stretch text-[12px] leading-none text-[#c8c8c8]">
        <span className="ml-[6px] flex w-[54px] items-center">錯誤清單</span>
        <span className="flex w-[35px] items-center justify-center border border-t-0 border-[#3f3f46] bg-[#252526] text-[#0097fb]">輸出</span>
        <span className="ml-[7px] flex items-center">程式碼涵蓋範圍結果</span>
      </div>
    </div>
  );
}

function Properties() {
  return (
    <div className="flex h-[925px] w-[347px] shrink-0 flex-col border border-[#3f3f46] bg-[#252526]">
      <div className="flex h-[22px] shrink-0 items-center bg-[#2d2d30] pl-[5px] text-[12px] text-[#d0d0d0]">
        <span>屬性</span>
        <span className={`ml-[8px] h-[8px] w-[256px] ${grip}`} />
        <Tri className="ml-[7px] h-[5px] w-[8px] text-[#e0e0e0]" />
        <Pin className="ml-[5px] h-[12px] w-[12px] text-[#e0e0e0]" />
        <X className="ml-[5px] h-[13px] w-[13px] text-[#e0e0e0]" strokeWidth={2.4} />
      </div>
      <div className="flex h-[24px] shrink-0 items-center justify-end bg-[#2d2d30] pr-[3px]">
        <Tri className="h-[5px] w-[7px] text-[#e0e0e0]" />
      </div>
      <div className="flex h-[26px] shrink-0 items-center border-y border-[#232325] bg-[#2d2d30] pl-[3px] text-[#c8c8c8]">
        <span className="flex h-[22px] w-[23px] items-center justify-center border border-[#3399ff]"><AlignJustify className="h-[15px] w-[15px]" /></span>
        <span className="flex w-[24px] items-center justify-center"><svg viewBox="0 0 16 16" className="h-[16px] w-[16px]" fill="none"><path d="M1 7 L3.5 1 L6 7M2 5h3M1 9h5L1 15h5" stroke="#c8c8c8" strokeWidth="1.4" /><path d="M11 3v11M8 11l3 3 3-3" stroke="#4ea6ea" strokeWidth="2" /></svg></span>
        <Sep className="w-[6px]" />
        <span className="ml-[4px] flex items-center"><KeyRound className="h-[16px] w-[16px] rotate-90 fill-[#888] text-[#777]" /></span>
      </div>
      <div className="h-[790px] shrink-0 border-b border-[#2f2f31]" />
    </div>
  );
}

function MainWindow() {
  return (
    <div className="absolute left-[164px] top-[157px] flex h-[631px] w-[934px] flex-col bg-white font-['Noto_Sans','Noto_Sans_CJK_TC',sans-serif] text-black shadow-[0_4px_24px_rgba(0,0,0,0.55)]">
      <div className="flex h-[30px] shrink-0 items-center">
        <svg viewBox="0 0 24 24" className="ml-[9px] h-[15px] w-[15px]">
          <rect x="2" y="1" width="20" height="22" fill="#e8e8e8" stroke="#aaa" />
          <rect x="3" y="8" width="6" height="7" fill="#d32020" />
          <rect x="10" y="3" width="11" height="11" fill="#f0b400" />
          <rect x="10" y="15" width="11" height="7" fill="#3f8fe0" />
        </svg>
        <span className="ml-[5px] text-[13px]">MainWindow</span>
        <div className="ml-auto flex items-center">
          <Minus className="h-[14px] w-[14px]" strokeWidth={1.2} />
          <Square className="ml-[32px] h-[13px] w-[13px]" strokeWidth={1.2} />
          <X className="ml-[31px] mr-[16px] h-[15px] w-[15px]" strokeWidth={1} />
        </div>
      </div>
      <div className="flex h-[24px] shrink-0 items-center bg-linear-to-r from-[#f2f2f2] to-[#fbfbfb] pl-[15px] text-[13px]">
        <span>undo</span>
        <span className="ml-[19px] text-[#8a8a8a]">redo</span>
      </div>
      <div className="relative flex-1 bg-[#ffffe0] pt-[4px]">
        <div className="flex pl-[25px] text-[13px]">
          <button className="h-[29px] w-[183px] border-2 border-[#0078d7] bg-[#e1e1e1]">Rectangle</button>
          <button className="ml-[45px] h-[29px] w-[189px] border-2 border-[#bfbfbf] bg-[#cccccc] text-[#9a9a9a]">Line</button>
          <button className="ml-[49px] h-[29px] w-[189px] border-2 border-[#adadad] bg-[#e1e1e1]">Hexagon</button>
          <button className="ml-[39px] h-[29px] w-[209px] border-2 border-[#adadad] bg-[#e1e1e1]">Clear</button>
        </div>
        <svg className="absolute left-[90px] top-[67px] h-[118px] w-[120px]" viewBox="0 0 120 118" fill="none" stroke="#000">
          <rect x="9" y="9" width="101" height="100" strokeWidth="2" strokeDasharray="6 3" />
          <line x1="9" y1="9" x2="110" y2="109" strokeWidth="1" />
          {[[9, 9], [110, 9], [9, 109], [110, 109]].map(([x, y]) => (
            <ellipse key={`${x}-${y}`} cx={x} cy={y} rx="5" ry="5" fill="#fff" strokeWidth="1" />
          ))}
        </svg>
        <span className="absolute left-[686px] top-[550px] whitespace-nowrap bg-[#fbfbf2] px-[2px] text-[12px] leading-[16px]">Selected : Line(99,100,200,200)</span>
      </div>
    </div>
  );
}

function VsWindow() {
  return (
    <div className="relative flex h-full w-[1920px] shrink-0 flex-col bg-[#2d2d30] font-['Noto_Sans','Noto_Sans_CJK_TC',sans-serif] text-[#f1f1f1]">
      <div className="flex h-[32px] shrink-0 items-start">
        <VsLogo className="ml-[12px] mt-[5px] h-[26px] w-[22px] text-[#666]" />
        <span className="ml-[10px] mt-[8px] text-[13px] leading-[20px] text-[#999]">sketch_system - Microsoft Visual Studio</span>
        <span className="ml-auto flex h-[26px] w-[34px] items-center justify-center bg-[#ffcc00]">
          <svg viewBox="0 0 16 16" className="h-[16px] w-[16px]"><path d="M1 1H15L10.5 6 L11 15 L8 14 L6 6Z" fill="#000" /></svg>
        </span>
        <span className="flex h-[26px] w-[32px] items-center justify-center"><MessageSquare className="h-[15px] w-[15px] text-[#d0d0d0]" /></span>
        <div className="mt-[2px] flex h-[21px] w-[200px] items-center justify-between border border-[#434346] bg-[#333337] pl-[6px] pr-[3px] text-[12px] text-[#999]">
          <span>快速啟動 (Ctrl+Q)</span>
          <Search className="h-[14px] w-[14px] -scale-x-100 text-[#e0e0e0]" strokeWidth={3} />
        </div>
        <div className="ml-[12px] mt-[5px] flex items-center text-[#e0e0e0]">
          <Minus className="h-[15px] w-[15px]" strokeWidth={3} />
          <Copy className="ml-[19px] h-[14px] w-[14px] -scale-x-100" strokeWidth={2} />
          <X className="ml-[19px] mr-[9px] h-[15px] w-[15px]" strokeWidth={2} />
        </div>
      </div>
      <div className="flex h-[19px] shrink-0 items-center justify-between text-[12.5px] leading-none">
        <div className="ml-[11px] flex gap-[21px] whitespace-nowrap">
          {["檔案(F)", "編輯(E)", "檢視(V)", "專案(P)", "建置(B)", "偵錯(D)", "小組(M)", "工具(T)", "測試(S)", "分析(N)", "視窗(W)", "說明(H)"].map((m) => <span key={m}>{m}</span>)}
        </div>
        <div className="flex items-center text-[#d0d0d0]">
          <span className="text-[12px]">柏瑞 陳</span>
          <Tri className="ml-[7px] h-[4px] w-[6px] text-[#777]" />
          <span className="ml-[8px] mr-[7px] flex h-[20px] w-[20px] items-center justify-center bg-[#007f6e] text-[14px] text-white">柏</span>
        </div>
      </div>
      <div className="flex h-[34px] shrink-0 items-center whitespace-nowrap text-[#c8c8c8]">
        <span className={`ml-[11px] h-[22px] w-[4px] ${grip}`} />
        <Slot className="ml-[7px] w-[20px]"><CircleArrowLeft className="h-[16px] w-[16px] fill-[#4ea6ea] text-white" /></Slot>
        <Slot className="w-[14px]"><Tri className="h-[4px] w-[6px] text-[#888]" /></Slot>
        <Slot className="w-[20px]"><CircleArrowRight className="h-[15px] w-[15px] text-[#555]" /></Slot>
        <Sep className="w-[10px]" />
        <Slot className="w-[22px]"><FileText className="h-[16px] w-[16px]" /></Slot>
        <Slot className="w-[12px]"><Tri className="h-[4px] w-[6px] text-[#888]" /></Slot>
        <Slot className="w-[21px]"><FolderOpen className="h-[16px] w-[16px] fill-[#dcb67a] text-[#dcb67a]" /></Slot>
        <Slot className="w-[24px]"><Save className="h-[16px] w-[16px] fill-[#4ea6ea] text-[#cfe6f8]" /></Slot>
        <Slot className="w-[20px]"><Save className="h-[16px] w-[16px] fill-[#4ea6ea] text-[#cfe6f8]" /></Slot>
        <Sep className="w-[10px]" />
        <Slot className="w-[20px]"><Undo2 className="h-[16px] w-[16px] text-[#555]" /></Slot>
        <Slot className="w-[16px]"><Tri className="h-[4px] w-[6px] text-[#555]" /></Slot>
        <Slot className="w-[18px]"><Redo2 className="h-[16px] w-[16px] text-[#555]" /></Slot>
        <Slot className="w-[18px]"><Tri className="h-[4px] w-[6px] text-[#555]" /></Slot>
        <span className="mr-[6px] h-[22px] w-[2px] bg-[#46464a]" />
        <Combo className="w-[64px]" label="Debug" />
        <Combo className="ml-[7px] w-[109px]" label="Any CPU" />
        <Combo className="ml-[7px] w-[200px]" label="DrawingForm" />
        <Slot className="ml-[8px] w-[14px]"><Tri dir="right" className="h-[14px] w-[11px] text-[#6cc06c]" /></Slot>
        <span className="ml-[2px] w-[30px] text-[13px] text-[#f1f1f1]">開始</span>
        <Slot className="w-[10px]"><Tri className="h-[4px] w-[6px] text-[#888]" /></Slot>
        <Sep className="w-[12px]" />
        <Slot className="w-[18px]"><Files className="h-[16px] w-[16px] fill-[#dcb67a] text-[#dcb67a]" /></Slot>
        <Slot className="w-[18px]"><Tri className="mt-[10px] h-[4px] w-[6px] text-[#888]" /></Slot>
        <span className={`h-[22px] w-[4px] ${grip}`} />
        <Slot className="w-[28px]"><Copy className="h-[14px] w-[14px]" /></Slot>
        <Slot className="w-[16px]"><AlignLeft className="h-[14px] w-[14px] text-[#555]" /></Slot>
        <Sep className="w-[14px]" />
        <Slot className="w-[16px]"><AlignRight className="h-[14px] w-[14px] text-[#555]" /></Slot>
        <Slot className="w-[28px]"><AlignRight className="h-[14px] w-[14px] text-[#555]" /></Slot>
        <span className="h-[22px] w-[2px] bg-[#46464a]" />
        <Slot className="w-[26px]"><svg viewBox="0 0 12 16" className="h-[16px] w-[12px]" fill="#c8c8c8"><path d="M0 0h12v16L6 12 0 16Z" /></svg></Slot>
        <Slot className="w-[22px]"><ChevronLeft className="h-[14px] w-[14px] text-[#4ea6ea]" strokeWidth={3} /></Slot>
        <Slot className="w-[22px]"><ChevronRight className="h-[14px] w-[14px] text-[#4ea6ea]" strokeWidth={3} /></Slot>
        <Slot className="w-[20px]"><X className="h-[14px] w-[14px] text-[#e06a5a]" strokeWidth={3} /></Slot>
        <Slot className="w-[16px]"><Tri className="mt-[10px] h-[4px] w-[6px] text-[#888]" /></Slot>
      </div>
      <div className="flex h-[932px] shrink-0 items-start">
        <div className="flex w-[31px] shrink-0 flex-col gap-[12px] pl-[1px]">
          <Vertical className="h-[60px] w-[25px]">伺服器總管</Vertical>
          <Vertical className="h-[36px] w-[25px]">工具箱</Vertical>
          <Vertical className="h-[48px] w-[25px]">資料來源</Vertical>
        </div>
        <Explorer />
        <Center />
        <Properties />
        <div className="ml-[8px] flex w-[24px] shrink-0 justify-end">
          <div className="h-[48px] border-r-[6px] border-[#3f3f46] pr-[4px] [writing-mode:vertical-rl] text-[12px] leading-none text-[#c8c8c8]">診斷工具</div>
        </div>
      </div>
      <div className="flex h-[23px] shrink-0 items-center bg-[#007acc] text-[13px] text-white">
        <Square className="ml-[5px] h-[13px] w-[13px] -skew-x-12" strokeWidth={1.5} />
        <span className="ml-[7px]">建置成功</span>
        <div className="ml-auto flex items-center">
          <ArrowUp className="h-[15px] w-[15px]" strokeWidth={2.5} />
          <span className="ml-[9px]">0</span>
          <Pencil className="ml-[24px] h-[14px] w-[14px] fill-white" />
          <span className="ml-[6px]">99*</span>
          <Diamond className="ml-[20px] h-[15px] w-[15px] fill-white" />
          <span className="ml-[7px]">sketch_system</span>
          <GitBranch className="ml-[21px] h-[15px] w-[15px]" strokeWidth={2.5} />
          <span className="ml-[8px]">master</span>
          <Tri dir="up" className="ml-[5px] mr-[21px] h-[4px] w-[7px]" />
        </div>
      </div>
      <Taskbar tray />
      <MainWindow />
    </div>
  );
}

export default function App() {
  return (
    <div className="flex h-[1080px] w-[3840px] overflow-hidden">
      <WordWindow />
      <VsWindow />
    </div>
  );
}
